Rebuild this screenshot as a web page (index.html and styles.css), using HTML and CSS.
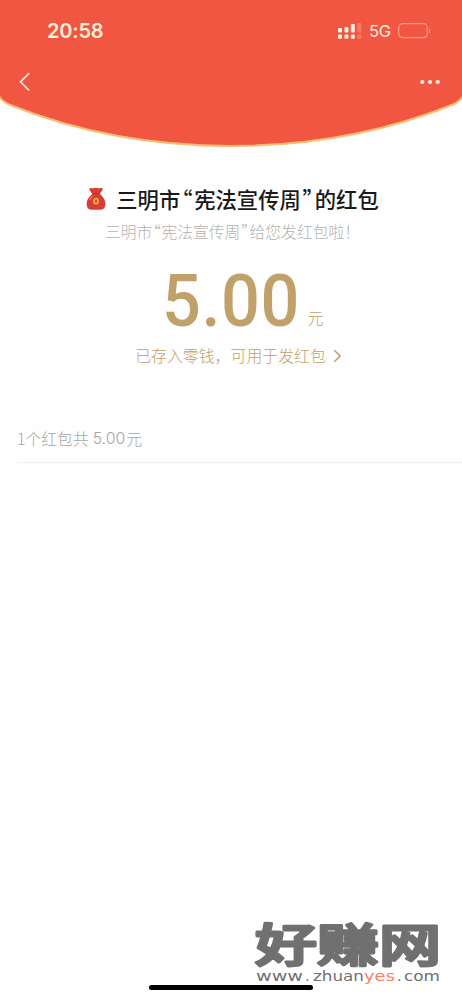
FILE: index.html
```html
<!DOCTYPE html>
<html lang="zh-CN">
<head>
<meta charset="utf-8">
<meta name="viewport" content="width=device-width">
<title>红包</title>
<link rel="stylesheet" href="styles.css">
</head>
<body>
<main class="screen">
  <header class="hero">
    <svg class="hero-bg" viewBox="0 0 462 150" aria-hidden="true">
      <path class="hero-shape" d="M-2-2H464V94Q461 101 453 104.5Q350 146 231 146Q112 146 9 104.5Q1 101-2 94Z"/>
    </svg>
    <div class="status">
      <span class="time">20:58</span>
      <div class="indicators">
        <svg width="24" height="17" viewBox="0 0 24 17" aria-hidden="true">
          <g fill="#fff3df"><rect y="5" width="4" height="4.5" rx="1"/><rect x="6.4" y="4" width="4" height="5.5" rx="1"/><rect x="12.8" y="1" width="4" height="8.5" rx="1"/><rect y="11.5" width="4" height="4.2" rx="1"/><rect x="6.4" y="11.5" width="4" height="4.2" rx="1"/><rect x="12.8" y="11.5" width="4" height="4.2" rx="1"/></g>
          <g fill="#f67c66"><rect x="19.2" y="0" width="4" height="9.5" rx="1"/><rect x="19.2" y="11.5" width="4" height="4.2" rx="1"/></g>
        </svg>
        <span class="network">5G</span>
        <svg width="34" height="16" viewBox="0 0 34 16" aria-hidden="true">
          <rect x=".7" y=".7" width="28.6" height="14" rx="4" fill="none" stroke="#fa9c7f" stroke-width="1.2"/>
          <path d="M31 5.2Q33.4 7.7 31 10.2Z" fill="#fa9c7f"/>
        </svg>
      </div>
    </div>
    <nav class="nav">
      <svg width="12" height="20" viewBox="0 0 12 20" aria-label="返回"><path d="M10.2 1.2 1.5 9.8l8.7 8.7" fill="none" stroke="#ffead0" stroke-width="1.7"/></svg>
      <svg width="20" height="6" viewBox="0 0 20 6" aria-label="更多"><g fill="#fff3e4"><circle cx="2.3" cy="3" r="2.1"/><circle cx="10" cy="3" r="2.1"/><circle cx="17.7" cy="3" r="2.1"/></g></svg>
    </nav>
  </header>

  <section class="summary">
    <h1 class="title">
      <svg class="bag" width="20" height="24" viewBox="0 0 20 24" aria-hidden="true">
        <path d="M3.2 1.6Q5 .3 7 1.4Q10 0 13 1.4Q15.5.2 16.8 1.7Q16.5 4.5 13.6 6.7Q19.6 11.6 19.4 17.2Q19 22.8 14 22.8H6Q1 22.8.6 17.2Q.4 11.6 6.4 6.7Q3.5 4.5 3.2 1.6Z" fill="#d83d33"/>
        <path d="M6.2 6.2Q10 7.6 13.8 6.2" fill="none" stroke="#b7352d" stroke-width="1.1"/>
        <path d="M3.8 13Q4.6 10.4 6.6 8.9" fill="none" stroke="#ef8271" stroke-width="1.2"/>
        <ellipse cx="10" cy="14.2" rx="3" ry="3.4" fill="#eda044"/><ellipse cx="10" cy="14.2" rx=".9" ry="1.7" fill="#c65427"/>
      </svg>
      <span class="title-text">三明市<span class="quote">“</span>宪法宣传周<span class="quote">”</span>的红包</span>
    </h1>
    <p class="greeting">三明市<span class="quote">“</span>宪法宣传周<span class="quote">”</span>给您发红包啦！</p>
    <div class="amount"><span class="number">5.00</span><span class="unit">元</span></div>
    <a class="wallet"><span>已存入零钱，可用于发红包</span><svg width="9" height="14" viewBox="0 0 9 14" aria-hidden="true"><path d="m1.3 1.3 5.8 5.7-5.8 5.7" fill="none" stroke="#c1a16a" stroke-width="1.6"/></svg></a>
  </section>
  <section class="record"><span>1个红包共</span><span class="record-number">5.00</span><span>元</span></section>

  <svg class="watermark" width="200" height="74" viewBox="0 0 200 74" aria-label="好赚网">
    <g class="brand">
      <text x="3" y="46" textLength="186" lengthAdjust="spacingAndGlyphs">好赚网</text>
    </g>
    <g class="domain">
      <text x="4" y="65" textLength="47" lengthAdjust="spacingAndGlyphs">www</text>
      <text x="53" y="65">.</text>
      <text x="61" y="65" textLength="51" lengthAdjust="spacingAndGlyphs">zhuan</text>
      <text class="accent" x="112" y="65" textLength="31" lengthAdjust="spacingAndGlyphs">yes</text>
      <text x="145" y="65">.</text>
      <text x="152" y="65" textLength="36" lengthAdjust="spacingAndGlyphs">com</text>
    </g>
  </svg>
  <div class="home-indicator"></div>
</main>
</body>
</html>
```
FILE: styles.css
```css
* { box-sizing: border-box; }
body { margin: 0; background: #fefefe; font-family: "Noto Sans CJK SC", sans-serif; }
.screen { position: relative; width: 462px; height: 1000px; overflow: hidden; }
.hero { position: relative; height: 150px; padding-top: 18px; }
.hero-bg { position: absolute; inset: 0; width: 462px; height: 150px; z-index: -1; }
.hero-shape { fill: #f15642; stroke: #f8bd70; stroke-width: 2; }
.status { display: flex; justify-content: space-between; align-items: center; height: 26px; padding: 0 30px 0 47px; }
.time { color: #fff0da; font: 600 20px/26px Inter, sans-serif; letter-spacing: -.2px; }
.indicators { display: flex; align-items: center; }
.network { width: 23px; margin: 0 6px 0 7px; color: #fff0da; font: 400 16.5px/26px Inter, sans-serif; letter-spacing: -.2px; }
.nav { display: flex; justify-content: space-between; align-items: center; height: 20px; margin-top: 28px; padding: 0 22px 0 19px; }
.summary { display: flex; flex-direction: column; align-items: center; height: 265px; padding-top: 33px; }
.title { display: flex; align-items: center; gap: 10px; height: 32px; margin: 0 0 0 3px; color: #191919; font-size: 21.3px; font-weight: 500; line-height: 32px; white-space: nowrap; }
.quote { font-feature-settings: "halt"; }
.title .quote { margin: 0 1.7px; }
.greeting { height: 24px; margin: 5px 0 0 3px; color: #b3b3b3; font-size: 15.8px; line-height: 24px; font-weight: 300; white-space: nowrap; }
.greeting .quote { margin: 0 .6px; }
.amount { display: flex; align-items: flex-end; width: 140px; height: 88px; color: #c1a16a; margin-left: 1px; }
.number { width: 146px; flex: none; font: 500 72px/60px Roboto, sans-serif; letter-spacing: .6px; transform: scaleX(.95); transform-origin: left; }
.unit { flex: none; font-size: 16px; line-height: 24px; font-weight: 300; padding-bottom: 3px; }
.wallet { display: flex; align-items: center; gap: 7px; height: 24px; margin: 12px 0 0 15px; color: #c1a16a; font-size: 15.9px; line-height: 24px; font-weight: 300; white-space: nowrap; }
.record { display: flex; height: 48px; margin-left: 17px; padding-top: 12px; border-bottom: 1px solid #f0f0f0; color: #a5a5a5; font-size: 15.8px; line-height: 24px; font-weight: 300; }
.record-number { margin: 0 1px 0 4px; font-family: Inter, sans-serif; }
.watermark { position: absolute; left: 252px; top: 916px; overflow: visible; }
.brand { fill: #707070; stroke: #707070; stroke-width: 2.8; stroke-linejoin: round; font: 500 45.5px "Noto Sans CJK SC", sans-serif; }
.domain { fill: #707070; font: 400 14.5px "DejaVu Sans", sans-serif; }
.accent { fill: #fa8063; }
.home-indicator { position: absolute; left: 149px; top: 985px; width: 164px; height: 5px; border-radius: 3px; background: #000; }
```
